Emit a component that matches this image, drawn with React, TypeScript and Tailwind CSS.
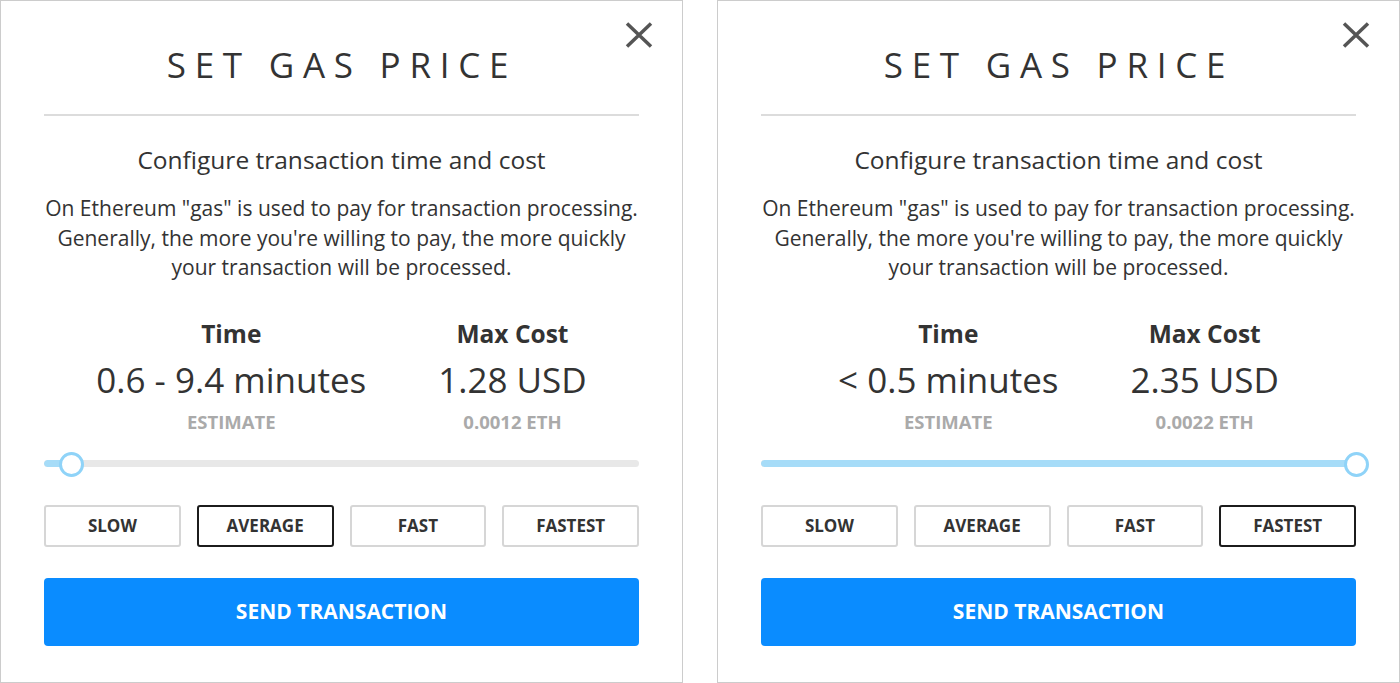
import { useState } from 'react';

type Speed = 'SLOW' | 'AVERAGE' | 'FAST' | 'FASTEST';

interface GasPanelProps {
  time: string;
  usd: string;
  eth: string;
  selected: Speed;
  fillPct: number;
}

const speeds: Speed[] = ['SLOW', 'AVERAGE', 'FAST', 'FASTEST'];

function CloseIcon() {
  return (
    <svg width="28" height="26" viewBox="0 0 28 26" className="block">
      <path d="M2 1.5 L26 24.5 M26 1.5 L2 24.5" stroke="#555" strokeWidth="3.5" strokeLinecap="butt" />
    </svg>
  );
}

function GasPanel({ time, usd, eth, selected: initial, fillPct }: GasPanelProps) {
  const [selected, setSelected] = useState<Speed>(initial);

  return (
    <div className="relative w-[683px] h-[683px] shrink-0 border border-[#cccccc] bg-white px-[43px] flex flex-col text-[#333]">
      {/* Close button */}
      <button className="absolute right-[29px] top-[21px] p-0">
        <CloseIcon />
      </button>

      <h1 className="mt-[44px] text-center text-[35px] leading-[40px] font-normal tracking-[0.25em] pl-[1px] text-[#333]">
        SET GAS PRICE
      </h1>
      <div className="mt-[29px] h-[2px] bg-[#dcdcdc]" />

      <h2 className="mt-[29px] text-center text-[24.5px] leading-[30px] text-[#333]">
        Configure transaction time and cost
      </h2>
      <p className="mt-[19px] -mx-[4px] text-center text-[21px] leading-[29.5px] text-[#333]">
        On Ethereum "gas" is used to pay for transaction processing.
        <br />
        Generally, the more you're willing to pay, the more quickly
        <br />
        your transaction will be processed.
      </p>

      {/* Estimates */}
      <div className="mt-[36px] flex justify-center gap-[72px]">
        <div className="flex flex-col items-center">
          <div className="text-[24.5px] leading-[30px] font-bold">Time</div>
          <div className="mt-[11px] text-[35px] leading-[40px]">{time}</div>
          <div className="mt-[11px] text-[18.5px] leading-[22px] font-bold text-[#aaaaaa]">ESTIMATE</div>
        </div>
        <div className="flex flex-col items-center">
          <div className="text-[24.5px] leading-[30px] font-bold">Max Cost</div>
          <div className="mt-[11px] text-[35px] leading-[40px]">{usd}</div>
          <div className="mt-[11px] text-[18.5px] leading-[22px] font-bold text-[#aaaaaa]">{eth}</div>
        </div>
      </div>

      {/* Slider */}
      <div className="mt-[19px] relative h-[24px] flex items-center">
        <div className="w-full h-[7px] rounded-full bg-[#e8e8e8] overflow-hidden">
          <div className="h-full bg-[#a6dcf8] rounded-full" style={{ width: `${fillPct}%` }} />
        </div>
        <div
          className="absolute top-0 w-[25px] h-[25px] -ml-[12.5px] rounded-full bg-white border-[3px] border-[#8fd3f8]"
          style={{ left: fillPct === 100 ? '100%' : '27px' }}
        />
      </div>

      {/* Speed buttons */}
      <div className="mt-[29px] grid grid-cols-4 gap-[16px]">
        {speeds.map(s => (
          <button
            key={s}
            onClick={() => setSelected(s)}
            className={
              s === selected
                ? 'h-[42px] rounded-[3px] border-2 border-[#1c1c1c] bg-white text-[17px] font-bold text-[#333]'
                : 'h-[42px] rounded-[3px] border-2 border-[#d6d6d6] bg-white text-[17px] font-bold text-[#333]'
            }
          >
            {s}
          </button>
        ))}
      </div>

      <button className="mt-[31px] h-[68px] rounded-[4px] bg-[#0a8cff] text-white text-[21px] font-bold">
        SEND TRANSACTION
      </button>
    </div>
  );
}

export default function App() {
  return (
    <div
      className="w-[1400px] h-[683px] bg-white flex gap-[34px]"
      style={{ fontFamily: '"Open Sans", "Noto Sans", sans-serif' }}
    >
      <GasPanel time="0.6 - 9.4 minutes" usd="1.28 USD" eth="0.0012 ETH" selected="AVERAGE" fillPct={4.5} />
      <GasPanel time="< 0.5 minutes" usd="2.35 USD" eth="0.0022 ETH" selected="FASTEST" fillPct={100} />
    </div>
  );
}
